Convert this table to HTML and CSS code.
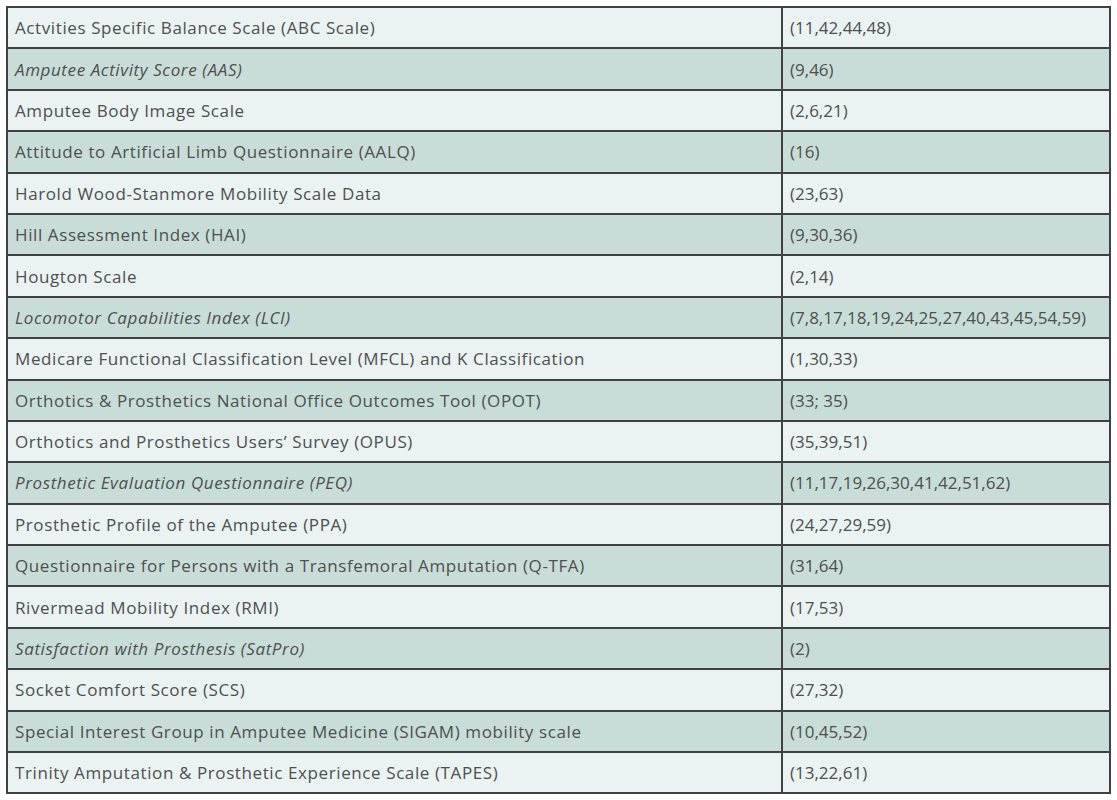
FILE: index.html
```html
<!DOCTYPE html>
<html>
<head>
<meta charset="utf-8">
<link rel="stylesheet" href="styles.css">
</head>
<body>
<table class="refs">
<tbody>
<tr><td class="name">Actvities Specific Balance Scale (ABC Scale)</td><td class="cite">(11,42,44,48)</td></tr>
<tr><td class="name em">Amputee Activity Score (AAS)</td><td class="cite">(9,46)</td></tr>
<tr><td class="name">Amputee Body Image Scale</td><td class="cite">(2,6,21)</td></tr>
<tr><td class="name">Attitude to Artificial Limb Questionnaire (AALQ)</td><td class="cite">(16)</td></tr>
<tr><td class="name">Harold Wood-Stanmore Mobility Scale Data</td><td class="cite">(23,63)</td></tr>
<tr><td class="name">Hill Assessment Index (HAI)</td><td class="cite">(9,30,36)</td></tr>
<tr><td class="name">Hougton Scale</td><td class="cite">(2,14)</td></tr>
<tr><td class="name em">Locomotor Capabilities Index (LCI)</td><td class="cite">(7,8,17,18,19,24,25,27,40,43,45,54,59)</td></tr>
<tr><td class="name">Medicare Functional Classification Level (MFCL) and K Classification</td><td class="cite">(1,30,33)</td></tr>
<tr><td class="name">Orthotics &amp; Prosthetics National Office Outcomes Tool (OPOT)</td><td class="cite">(33; 35)</td></tr>
<tr><td class="name">Orthotics and Prosthetics Users’ Survey (OPUS)</td><td class="cite">(35,39,51)</td></tr>
<tr><td class="name em">Prosthetic Evaluation Questionnaire (PEQ)</td><td class="cite">(11,17,19,26,30,41,42,51,62)</td></tr>
<tr><td class="name">Prosthetic Profile of the Amputee (PPA)</td><td class="cite">(24,27,29,59)</td></tr>
<tr><td class="name">Questionnaire for Persons with a Transfemoral Amputation (Q-TFA)</td><td class="cite">(31,64)</td></tr>
<tr><td class="name">Rivermead Mobility Index (RMI)</td><td class="cite">(17,53)</td></tr>
<tr><td class="name em">Satisfaction with Prosthesis (SatPro)</td><td class="cite">(2)</td></tr>
<tr><td class="name">Socket Comfort Score (SCS)</td><td class="cite">(27,32)</td></tr>
<tr><td class="name">Special Interest Group in Amputee Medicine (SIGAM) mobility scale</td><td class="cite">(10,45,52)</td></tr>
<tr><td class="name">Trinity Amputation &amp; Prosthetic Experience Scale (TAPES)</td><td class="cite">(13,22,61)</td></tr>
</tbody>
</table>
</body>
</html>
```
FILE: styles.css
```css
html, body {
  margin: 0;
  padding: 0;
  background: #ffffff;
}
body {
  padding: 6px 0 0 6px;
  font-family: "Open Sans", "Liberation Sans", sans-serif;
  color: #4d5050;
}
.refs {
  border-collapse: collapse;
  width: 1105px;
  border: 2px solid #3f4242;
}
.refs tr {
  height: 41.4px;
}
.refs tr:nth-child(odd) {
  background: #eaf2f2;
}
.refs tr:nth-child(even) {
  background: #c8dcd8;
}
.refs td {
  border: 2px solid #3f4242;
  padding: 0 0 0 7px;
  font-size: 17px;
  vertical-align: middle;
  white-space: nowrap;
}
.refs td.name {
  width: 766px;
  letter-spacing: 0.6px;
}
.refs td.em {
  font-style: italic;
}
```
